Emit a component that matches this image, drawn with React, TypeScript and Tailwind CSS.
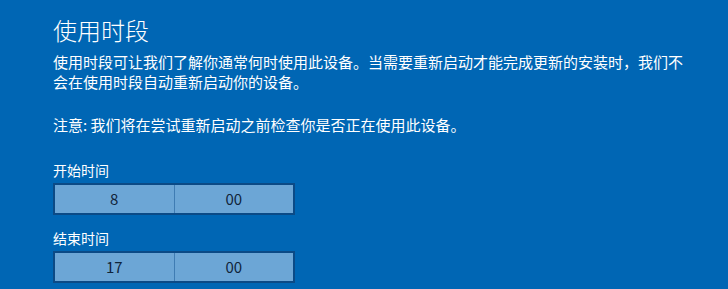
import React from 'react';

const font = { fontFamily: '"Noto Sans CJK SC", "Microsoft YaHei", sans-serif' };

const TimeBox: React.FC<{ hour: string; minute: string }> = ({ hour, minute }) => (
  <div className="flex w-[242px] h-[32px] border-2 border-[#0b4a86] bg-[#6ca6d6] text-[15px] text-[#10243a]">
    <div className="flex-1 flex items-center justify-center border-r border-[#3f7cb3]">{hour}</div>
    <div className="flex-1 flex items-center justify-center">{minute}</div>
  </div>
);

export default function App() {
  return (
    <div className="w-[728px] h-[289px] bg-[#0066b4] text-white overflow-hidden" style={font}>
      <div className="pl-[53px] pt-[14px]">
        <h1 className="text-[24px] leading-[32px] font-light">使用时段</h1>
        <p className="mt-[6px] text-[15px] leading-[20px] w-[640px]">
          使用时段可让我们了解你通常何时使用此设备。当需要重新启动才能完成更新的安装时，我们不会在使用时段自动重新启动你的设备。
        </p>
        <p className="mt-[23px] text-[15px] leading-[20px]">注意: 我们将在尝试重新启动之前检查你是否正在使用此设备。</p>
        <div className="mt-[25px] text-[14px] leading-[20px]">开始时间</div>
        <div className="mt-[3px]">
          <TimeBox hour="8" minute="00" />
        </div>
        <div className="mt-[13px] text-[14px] leading-[20px]">结束时间</div>
        <div className="mt-[3px]">
          <TimeBox hour="17" minute="00" />
        </div>
      </div>
    </div>
  );
}
